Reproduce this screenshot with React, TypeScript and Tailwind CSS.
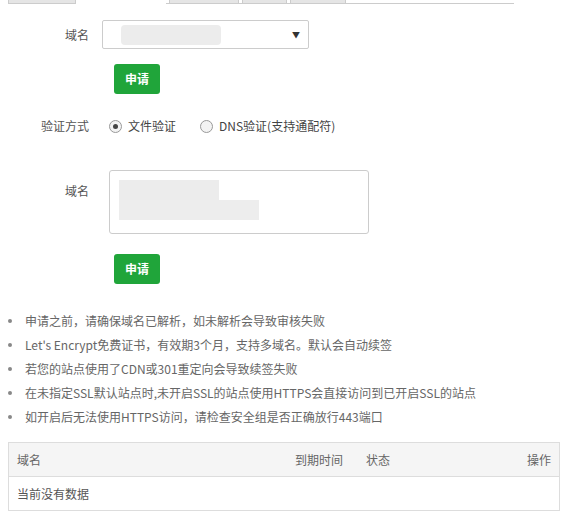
import React from 'react';

const tips = [
  '申请之前，请确保域名已解析，如未解析会导致审核失败',
  "Let's Encrypt免费证书，有效期3个月，支持多域名。默认会自动续签",
  '若您的站点使用了CDN或301重定向会导致续签失败',
  '在未指定SSL默认站点时,未开启SSL的站点使用HTTPS会直接访问到已开启SSL的站点',
  '如开启后无法使用HTTPS访问，请检查安全组是否正确放行443端口',
];

const Radio = ({ checked, label }: { checked?: boolean; label: string }) => (
  <label className="flex items-center gap-[6px]">
    <span className="w-[13px] h-[13px] rounded-full border border-[#999] bg-[#f3f3f3] flex items-center justify-center">
      {checked && <span className="w-[5px] h-[5px] rounded-full bg-[#444]" />}
    </span>
    <span>{label}</span>
  </label>
);

const ApplyButton = () => (
  <button className="w-[46px] h-[30px] rounded-[3px] bg-[#20a53a] text-white text-[12px] font-bold">申请</button>
);

export default function App() {
  return (
    <div
      className="w-[568px] h-[521px] bg-white text-[12px] text-[#555] overflow-hidden"
      style={{ fontFamily: '"Microsoft YaHei", "Noto Sans CJK SC", "Noto Sans", sans-serif' }}
    >
      {/* tabs */}
      <div className="flex h-[4px] items-start">
        <div className="ml-[8px] w-[68px] h-[4px] bg-[#e5e5e5] border-x border-b border-[#ccc]" />
        <div className="ml-[90px] flex-1 mr-[54px] h-[4px] border-b border-[#ccc] flex gap-[3px] pl-[3px]">
          <div className="w-[70px] h-[3px] bg-[#e5e5e5] border-x border-[#ccc]" />
          <div className="w-[45px] h-[3px] bg-[#e5e5e5] border-x border-[#ccc]" />
          <div className="w-[56px] h-[3px] bg-[#e5e5e5] border-x border-[#ccc]" />
        </div>
      </div>

      <div className="flex items-center mt-[16px]">
        <span className="w-[89px] text-right">域名</span>
        <div className="ml-[13px] w-[207px] h-[29px] border border-[#ccc] rounded-[2px] flex items-center justify-between px-[8px]">
          <span className="w-[100px] h-[20px] bg-[#ececec] ml-[10px] rounded-[4px]" />
          <span className="text-[8px] text-[#333]">▼</span>
        </div>
      </div>

      <div className="ml-[114px] mt-[15px]"><ApplyButton /></div>

      <div className="flex items-center mt-[23px]">
        <span className="w-[89px] text-right">验证方式</span>
        <div className="ml-[20px] flex gap-[24px] text-[#444]">
          <Radio checked label="文件验证" />
          <Radio label="DNS验证(支持通配符)" />
        </div>
      </div>

      <div className="flex items-start mt-[35px]">
        <span className="w-[89px] text-right mt-[12px]">域名</span>
        <div className="ml-[20px] w-[260px] h-[64px] border border-[#ccc] rounded-[3px] p-[9px] flex flex-col gap-[0px]">
          <span className="w-[100px] h-[20px] bg-[#ececec]" />
          <span className="w-[140px] h-[20px] bg-[#ededed]" />
        </div>
      </div>

      <div className="ml-[114px] mt-[20px]"><ApplyButton /></div>

      <ul className="mt-[28px] flex flex-col gap-[6px] text-[#666]">
        {tips.map((t) => (
          <li key={t} className="flex items-center h-[18px]">
            <span className="ml-[8px] w-[4px] h-[4px] rounded-full bg-[#888]" />
            <span className="ml-[13px]">{t}</span>
          </li>
        ))}
      </ul>

      <div className="mx-[8px] mt-[16px] border border-[#ddd]">
        <div className="h-[34px] bg-[#f5f5f5] border-b border-[#ddd] flex items-center px-[8px] text-[#666]">
          <span className="w-[278px]">域名</span>
          <span className="w-[71px]">到期时间</span>
          <span className="flex-1">状态</span>
          <span>操作</span>
        </div>
        <div className="h-[33px] flex items-center px-[8px] text-[#555]">当前没有数据</div>
      </div>
    </div>
  );
}
